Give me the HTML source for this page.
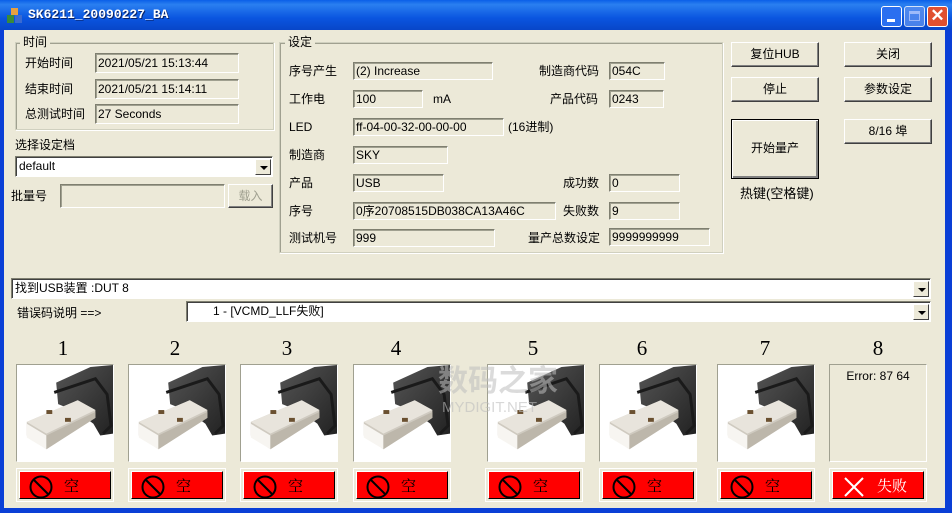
<!DOCTYPE html>
<html><head><meta charset="utf-8">
<style>
*{box-sizing:border-box;margin:0;padding:0}
body{width:952px;height:513px;overflow:hidden;background:#0a3fd6;font-family:"Liberation Sans","Noto Sans CJK SC",sans-serif;font-size:12px;line-height:14px;color:#000;position:relative}
.a{position:absolute}
#title{left:0;top:0;width:952px;height:30px;background:linear-gradient(#0a5fe8,#2a7ff0 15%,#0a55e0 60%,#0846c8);}
#title .t{left:28px;top:8px;color:#fff;font-weight:bold;font-family:"Liberation Mono",monospace;font-size:13px;text-shadow:1px 1px #0a246a}
#body{left:4px;top:30px;width:941px;height:478px;background:#ECE9D8}
.grp{border:1px solid #d0d0bf;box-shadow:inset 1px 1px #a0a090, 1px 1px #fff}
.gl{background:#ECE9D8;padding:0 3px;font-size:12px}
.fld{background:#ECE9D8;border:1px solid;border-color:#7f7f70 #fff #fff #7f7f70;box-shadow:inset 1px 1px #a0a090;height:18px;line-height:16px;padding-left:2px;font-size:12px;white-space:nowrap;overflow:hidden}
.btn{background:#ECE9D8;border:1px solid;border-color:#fff #404040 #404040 #fff;box-shadow:inset -1px -1px #808080;text-align:center;font-size:12px}
.combo{background:#fff;border:1px solid;border-color:#7f7f70 #fff #fff #7f7f70;box-shadow:inset 1px 1px #404040;height:21px;line-height:19px;padding-left:3px}
.arr{position:absolute;right:1px;top:2px;width:16px;height:16px;background:#ECE9D8;border:1px solid;border-color:#fff #404040 #404040 #fff}
.arr:after{content:"";position:absolute;left:4px;top:6px;border-left:4px solid transparent;border-right:4px solid transparent;border-top:4px solid #000}
.num{font-family:"Liberation Serif",serif;font-size:21px;line-height:24px;width:98px;text-align:center;top:336px}
.img{top:364px;width:98px;height:98px;background:#fff;border:1px solid;border-color:#a0a090 #fff #fff #a0a090;overflow:hidden}
.rb{top:468px;width:98px;height:34px;border:1px solid #fff;background:#ECE9D8;padding:2px}
.rb div{width:100%;height:100%;background:#f00;border:1px solid;border-color:#fff #000 #000 #fff;position:relative}
.rb span{position:absolute;left:44px;top:4px;font-size:15px;line-height:20px;font-family:"Noto Serif CJK SC",serif}
</style></head><body>
<div id="title" class="a">
<svg class="a" style="left:7px;top:8px" width="16" height="16"><rect x="4" y="0" width="7" height="7" fill="#e8a040"/><rect x="0" y="7" width="7" height="8" fill="#3a8a3a"/><rect x="8" y="7" width="7" height="8" fill="#3a6ad0"/></svg>
<div class="a t">SK6211_20090227_BA</div>
<div class="a" style="left:881px;top:6px;width:21px;height:21px;background:#2a6ff0;border:1px solid #fff;border-radius:3px"><div class="a" style="left:5px;top:12px;width:8px;height:3px;background:#fff"></div></div>
<div class="a" style="left:904px;top:6px;width:21px;height:21px;background:#5a8ff0;border:1px solid #fff;border-radius:3px;opacity:.8"><div class="a" style="left:4px;top:4px;width:11px;height:10px;border:1px solid #c0d0ff;border-top-width:3px"></div></div>
<div class="a" style="left:927px;top:6px;width:21px;height:21px;background:#e05030;border:1px solid #fff;border-radius:3px;color:#fff;font-weight:bold;font-size:17px;line-height:18px;text-align:center">✕</div>
</div>
<div id="body" class="a"></div>
<div class="a grp" style="left:15px;top:42px;width:259px;height:88px"></div>
<div class="a gl" style="left:20px;top:35px">时间</div>
<div class="a" style="left:25px;top:56px">开始时间</div>
<div class="a fld" style="left:95px;top:53px;width:144px;height:20px;line-height:18px">2021/05/21 15:13:44</div>
<div class="a" style="left:25px;top:82px">结束时间</div>
<div class="a fld" style="left:95px;top:79px;width:144px;height:20px;line-height:18px">2021/05/21 15:14:11</div>
<div class="a" style="left:25px;top:107px">总测试时间</div>
<div class="a fld" style="left:95px;top:104px;width:144px;height:20px;line-height:18px">27 Seconds</div>
<div class="a" style="left:15px;top:138px">选择设定档</div>
<div class="a combo" style="left:15px;top:156px;width:258px">default<div class="arr"></div></div>
<div class="a" style="left:11px;top:189px">批量号</div>
<div class="a fld" style="left:60px;top:184px;width:165px;height:24px"></div>
<div class="a btn" style="left:228px;top:184px;width:45px;height:24px;line-height:22px;color:#a0a090">载入</div>
<div class="a grp" style="left:279px;top:42px;width:444px;height:211px"></div>
<div class="a gl" style="left:285px;top:35px">设定</div>
<div class="a" style="left:289px;top:64px">序号产生</div>
<div class="a fld" style="left:353px;top:62px;width:140px">(2) Increase</div>
<div class="a" style="left:539px;top:64px">制造商代码</div>
<div class="a fld" style="left:609px;top:62px;width:56px">054C</div>
<div class="a" style="left:289px;top:92px">工作电</div>
<div class="a fld" style="left:353px;top:90px;width:70px">100</div>
<div class="a" style="left:433px;top:92px">mA</div>
<div class="a" style="left:550px;top:92px">产品代码</div>
<div class="a fld" style="left:609px;top:90px;width:55px">0243</div>
<div class="a" style="left:289px;top:120px">LED</div>
<div class="a fld" style="left:353px;top:118px;width:151px">ff-04-00-32-00-00-00</div>
<div class="a" style="left:508px;top:120px">(16进制)</div>
<div class="a" style="left:289px;top:148px">制造商</div>
<div class="a fld" style="left:353px;top:146px;width:95px">SKY</div>
<div class="a" style="left:289px;top:176px">产品</div>
<div class="a fld" style="left:353px;top:174px;width:91px">USB</div>
<div class="a" style="left:563px;top:176px">成功数</div>
<div class="a fld" style="left:609px;top:174px;width:71px">0</div>
<div class="a" style="left:289px;top:204px">序号</div>
<div class="a fld" style="left:353px;top:202px;width:203px">0序20708515DB038CA13A46C</div>
<div class="a" style="left:563px;top:204px">失败数</div>
<div class="a fld" style="left:609px;top:202px;width:71px">9</div>
<div class="a" style="left:289px;top:231px">测试机号</div>
<div class="a fld" style="left:353px;top:229px;width:142px">999</div>
<div class="a" style="left:528px;top:231px">量产总数设定</div>
<div class="a fld" style="left:609px;top:228px;width:101px">9999999999</div>
<div class="a btn" style="left:731px;top:42px;width:88px;height:25px;line-height:23px">复位HUB</div>
<div class="a btn" style="left:844px;top:42px;width:88px;height:25px;line-height:23px">关闭</div>
<div class="a btn" style="left:731px;top:77px;width:88px;height:25px;line-height:23px">停止</div>
<div class="a btn" style="left:844px;top:77px;width:88px;height:25px;line-height:23px">参数设定</div>
<div class="a btn" style="left:731px;top:119px;width:88px;height:60px;line-height:56px;border:1px solid #000;box-shadow:inset 1px 1px #fff,inset -2px -2px #808080">开始量产</div>
<div class="a btn" style="left:844px;top:119px;width:88px;height:25px;line-height:23px">8/16 埠</div>
<div class="a" style="left:740px;top:187px;font-size:13px">热键(空格键)</div>
<div class="a combo" style="left:11px;top:278px;width:920px;line-height:18px">找到USB装置 :DUT 8<div class="arr"></div></div>
<div class="a" style="left:17px;top:306px">错误码说明 ==&gt;</div>
<div class="a combo" style="left:186px;top:301px;width:745px;line-height:18px"><span style="padding-left:23px">1 - [VCMD_LLF失败]</span><div class="arr"></div></div>
<svg width="0" height="0" style="position:absolute"><defs>
<linearGradient id="bd" x1="0" y1="0" x2="1" y2="1"><stop offset="0" stop-color="#555"/><stop offset="1" stop-color="#222"/></linearGradient>
<symbol id="usb" viewBox="0 0 98 98">
<path d="M40 18 L75 2 L98 0 L98 70 L85 72 L78 60 L62 48 L42 40 Z" fill="url(#bd)"/>
<path d="M38 28 L80 14 L92 30 L96 62 L88 70" fill="none" stroke="#1a1a1a" stroke-width="3"/>
<path d="M10 58 L62 36 L80 46 L80 54 L30 86 L10 72 Z" fill="#cfcac0"/>
<path d="M10 58 L62 36 L80 46 L30 70 Z" fill="#e8e4dc"/>
<path d="M10 60 L30 72 L30 86 L10 74Z" fill="#f7f5f1"/>
<path d="M30 72 L80 48 L80 54 L30 86Z" fill="#bdb7ab"/>
<rect x="30" y="46" width="6" height="4" fill="#6a5030"/><rect x="49" y="54" width="6" height="4" fill="#6a5030"/>
</symbol></defs></svg>
<div class="a num" style="left:14px">1</div><div class="a num" style="left:126px">2</div><div class="a num" style="left:238px">3</div><div class="a num" style="left:347px">4</div><div class="a num" style="left:484px">5</div><div class="a num" style="left:593px">6</div><div class="a num" style="left:716px">7</div><div class="a num" style="left:829px">8</div>
<div class="a img" style="left:16px"><svg width="96" height="96"><use href="#usb"/></svg></div>
<div class="a img" style="left:128px"><svg width="96" height="96"><use href="#usb"/></svg></div>
<div class="a img" style="left:240px"><svg width="96" height="96"><use href="#usb"/></svg></div>
<div class="a img" style="left:353px"><svg width="96" height="96"><use href="#usb"/></svg></div>
<div class="a img" style="left:487px"><svg width="96" height="96"><use href="#usb"/></svg></div>
<div class="a img" style="left:599px"><svg width="96" height="96"><use href="#usb"/></svg></div>
<div class="a img" style="left:717px"><svg width="96" height="96"><use href="#usb"/></svg></div>
<div class="a img" style="left:829px;background:#ECE9D8;text-align:center;padding-top:4px">Error: 87 64</div>
<div class="a" style="left:438px;top:364px;color:rgba(190,190,190,.55);font-size:30px;line-height:36px;font-weight:bold">数码之家</div>
<div class="a" style="left:442px;top:401px;color:rgba(190,190,190,.6);font-size:15px">MYDIGIT.NET</div>
<div class="a rb" style="left:16px"><div><svg class="a" style="left:9px;top:3px" width="24" height="24"><circle cx="12" cy="12" r="10.5" fill="none" stroke="#000" stroke-width="2"/><line x1="5" y1="5" x2="19" y2="19" stroke="#000" stroke-width="2"/></svg><span>空</span></div></div>
<div class="a rb" style="left:128px"><div><svg class="a" style="left:9px;top:3px" width="24" height="24"><circle cx="12" cy="12" r="10.5" fill="none" stroke="#000" stroke-width="2"/><line x1="5" y1="5" x2="19" y2="19" stroke="#000" stroke-width="2"/></svg><span>空</span></div></div>
<div class="a rb" style="left:240px"><div><svg class="a" style="left:9px;top:3px" width="24" height="24"><circle cx="12" cy="12" r="10.5" fill="none" stroke="#000" stroke-width="2"/><line x1="5" y1="5" x2="19" y2="19" stroke="#000" stroke-width="2"/></svg><span>空</span></div></div>
<div class="a rb" style="left:353px"><div><svg class="a" style="left:9px;top:3px" width="24" height="24"><circle cx="12" cy="12" r="10.5" fill="none" stroke="#000" stroke-width="2"/><line x1="5" y1="5" x2="19" y2="19" stroke="#000" stroke-width="2"/></svg><span>空</span></div></div>
<div class="a rb" style="left:485px"><div><svg class="a" style="left:9px;top:3px" width="24" height="24"><circle cx="12" cy="12" r="10.5" fill="none" stroke="#000" stroke-width="2"/><line x1="5" y1="5" x2="19" y2="19" stroke="#000" stroke-width="2"/></svg><span>空</span></div></div>
<div class="a rb" style="left:599px"><div><svg class="a" style="left:9px;top:3px" width="24" height="24"><circle cx="12" cy="12" r="10.5" fill="none" stroke="#000" stroke-width="2"/><line x1="5" y1="5" x2="19" y2="19" stroke="#000" stroke-width="2"/></svg><span>空</span></div></div>
<div class="a rb" style="left:717px"><div><svg class="a" style="left:9px;top:3px" width="24" height="24"><circle cx="12" cy="12" r="10.5" fill="none" stroke="#000" stroke-width="2"/><line x1="5" y1="5" x2="19" y2="19" stroke="#000" stroke-width="2"/></svg><span>空</span></div></div>
<div class="a rb" style="left:829px"><div><svg class="a" style="left:10px;top:4px" width="22" height="22"><line x1="2" y1="2" x2="20" y2="20" stroke="#fff" stroke-width="2"/><line x1="20" y1="2" x2="2" y2="20" stroke="#fff" stroke-width="2"/></svg><span style="left:44px;color:#fff">失败</span></div></div>
</body></html>
